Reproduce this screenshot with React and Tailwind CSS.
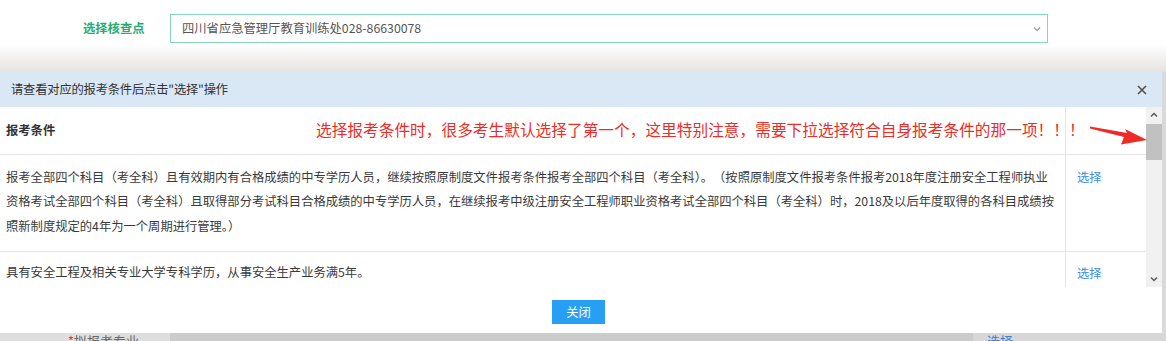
import React from "react";

const Caret = ({ dir = "down", className = "" }) => (
  <svg width="8" height="6" viewBox="0 0 8 6" className={className}>
    {dir === "down" ? (
      <path d="M1 1.5 L4 4.5 L7 1.5" fill="none" stroke="#5a5a5a" strokeWidth="1.5" />
    ) : (
      <path d="M1 4.5 L4 1.5 L7 4.5" fill="none" stroke="#5a5a5a" strokeWidth="1.5" />
    )}
  </svg>
);

export default function App() {
  return (
    <div className="relative w-[1166px] h-[341px] overflow-hidden bg-white font-['Noto_Sans_CJK_SC',sans-serif] text-[12.3px] text-[#333]">
      {/* top page area */}
      <div className="h-[72px] bg-[linear-gradient(to_bottom,#ffffff_0px,#ffffff_44px,#e5e3e1_72px)] pt-[14px]">
        <div className="flex items-center pl-[83px]">
          <div className="w-[87px] font-bold text-[#27ab72] leading-none">选择核查点</div>
          <div className="w-[878px] h-[29px] border-[1.5px] border-[#86d6b9] bg-white flex items-center justify-between pl-[11px] pr-[6px]">
            <span className="text-[#555] leading-none">四川省应急管理厅教育训练处028-86630078</span>
            <svg width="8" height="6" viewBox="0 0 8 6">
              <path d="M1 1.5 L4 4.5 L7 1.5" fill="none" stroke="#a0a0a0" strokeWidth="1.3" />
            </svg>
          </div>
        </div>
      </div>

      {/* modal row */}
      <div className="flex h-[261px]">
        <div className="w-[1162px] bg-white flex flex-col">
          <div className="h-[35px] bg-[#dae7f4] flex items-center justify-between pl-[11px] pr-[15px]">
            <span className="leading-none tracking-[-0.2px]">请查看对应的报考条件后点击"选择"操作</span>
            <svg width="10" height="10" viewBox="0 0 10 10">
              <path d="M1 1 L9 9 M9 1 L1 9" stroke="#505050" strokeWidth="1.6" />
            </svg>
          </div>

          <div className="h-[180px] flex">
            <div className="w-[1146px] overflow-hidden">
              <div className="flex h-[48px] border-b border-[#e4e4e4]">
                <div className="w-[1066px] border-r border-[#e4e4e4] flex items-center pl-[6px] font-bold">报考条件</div>
                <div className="w-[80px]"></div>
              </div>
              <div className="flex h-[97px] border-b border-[#e4e4e4]">
                <div className="w-[1066px] border-r border-[#e4e4e4] pl-[6px] pt-[10px] leading-[24.4px] text-[#3a3a3a]">
                  <div className="whitespace-nowrap">报考全部四个科目（考全科）且有效期内有合格成绩的中专学历人员，继续按照原制度文件报考条件报考全部四个科目（考全科）。　（按照原制度文件报考条件报考2018年度注册安全工程师执业</div>
                  <div className="whitespace-nowrap">资格考试全部四个科目（考全科）且取得部分考试科目合格成绩的中专学历人员，在继续报考中级注册安全工程师职业资格考试全部四个科目（考全科）时，2018及以后年度取得的各科目成绩按</div>
                  <div className="whitespace-nowrap">照新制度规定的4年为一个周期进行管理。）</div>
                </div>
                <div className="w-[80px] pl-[11px] pt-[10px] leading-[24.4px] text-[#3d8ee8]">选择</div>
              </div>
              <div className="flex h-[60px]">
                <div className="w-[1066px] border-r border-[#e4e4e4] pl-[6px] pt-[8px] leading-[24.4px] text-[#3a3a3a]">
                  具有安全工程及相关专业大学专科学历，从事安全生产业务满5年。
                </div>
                <div className="w-[80px] pl-[11px] pt-[9px] leading-[24.4px] text-[#3d8ee8]">选择</div>
              </div>
            </div>
            <div className="w-[16px] bg-[#f1f1f1] flex flex-col">
              <div className="h-[16px] flex items-center justify-center"><Caret dir="up" /></div>
              <div className="h-[36px] mt-[1px] bg-[#c1c1c1]"></div>
              <div className="flex-1"></div>
              <div className="h-[16px] flex items-center justify-center"><Caret dir="down" /></div>
            </div>
          </div>

          <div className="flex-1 pt-[13px] pl-[552px]">
            <div className="w-[53px] h-[24px] bg-[#279ff5] text-white flex items-center justify-center leading-none">关闭</div>
          </div>
        </div>
        <div className="flex-1 bg-[#d9d9d9]"></div>
      </div>

      {/* bottom page area under overlay (cut off at the window edge, as in the reference) */}
      <div className="flex h-[8px] overflow-hidden">
        <div className="w-[170px] bg-[#dedede] pl-[68px] overflow-hidden">
          <div className="mt-[1px] leading-[14px] text-[13px] text-[#666] whitespace-nowrap"><span className="text-[#e03a3a]">*</span>拟报考专业</div>
        </div>
        <div className="w-[803px] bg-[#cbcbcb]"></div>
        <div className="flex-1 bg-[#d7d7d7] pl-[14px] overflow-hidden">
          <div className="mt-[1px] leading-[14px] text-[13px] text-[#3d7fd0] whitespace-nowrap">选择</div>
        </div>
      </div>

      {/* red annotation overlay */}
      <div className="absolute left-[316px] top-[121px] text-[15.7px] leading-[18px] text-[#ee2c25] whitespace-nowrap">
        选择报考条件时，很多考生默认选择了第一个，这里特别注意，需要下拉选择符合自身报考条件的那一项！！！
      </div>
      <svg className="absolute left-0 top-0" width="1166" height="341" viewBox="0 0 1166 341" style={{ pointerEvents: "none" }}>
        <polygon points="1090,126.5 1127,133 1125,129 1147,140 1121,144.5 1124,137 1090,128.5" fill="#ee2c25" />
      </svg>
    </div>
  );
}
